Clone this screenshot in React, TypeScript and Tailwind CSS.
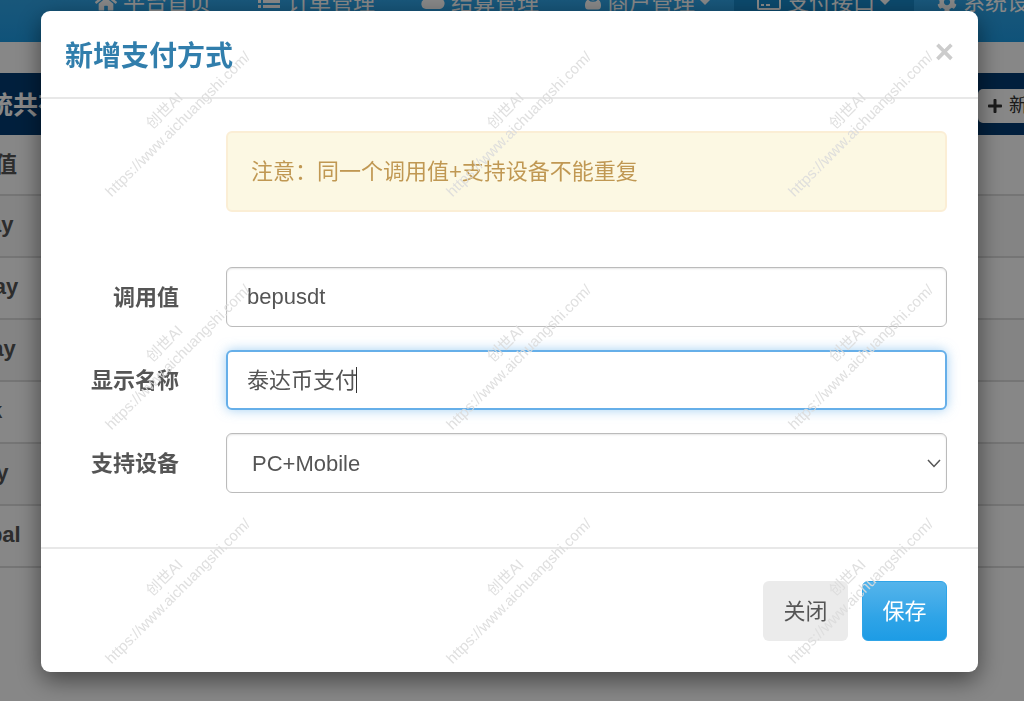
import { useState } from 'react'
import { FaCog, FaHome, FaPlus } from 'react-icons/fa'

const FONT = "font-['Liberation_Sans','Noto_Sans_CJK_SC',sans-serif]"

function ListIcon() {
  return (
    <svg width="24" height="22" viewBox="0 0 24 22" fill="currentColor" aria-hidden="true">
      <path d="M1 4h3v3H1zM6 4h17v3H6zM1 9h3v3H1zM6 9h17v3H6zM1 14h3v3H1zM6 14h17v3H6z" />
    </svg>
  )
}

function CloudIcon() {
  return (
    <svg width="24" height="22" viewBox="0 0 24 22" fill="currentColor" aria-hidden="true">
      <path d="M5 18a5 5 0 0 1-1-9.800A7 7 0 0 1 17 7a5.500 5.500 0 0 1 2 11z" />
    </svg>
  )
}

function UserIcon() {
  return (
    <svg width="16" height="22" viewBox="0 0 16 22" fill="currentColor" aria-hidden="true">
      <circle cx="8" cy="5" r="4.500" />
      <path d="M3 8.500a6.500 6.500 0 0 0 10 0c2 1 3 3 3 6 0 2.500-1 4-3 4H3c-2 0-3-1.500-3-4 0-3 1-5 3-6z" />
    </svg>
  )
}

function CardIcon() {
  return (
    <svg width="24" height="22" viewBox="0 0 24 22" fill="currentColor" aria-hidden="true">
      <path fillRule="evenodd" d="M2 2h20a2 2 0 0 1 2 2v13a2 2 0 0 1-2 2H2a2 2 0 0 1-2-2V4a2 2 0 0 1 2-2zM2 9v8h20V9zM4 13h3v2H4zM9 13h4v2H9z" />
    </svg>
  )
}

function Caret() {
  return (
    <svg className="ml-1" width="12" height="8" viewBox="0 0 12 8" fill="currentColor" aria-hidden="true">
      <path d="M0 1h12L6 7z" />
    </svg>
  )
}

const navItems = [
  { label: '平台首页', icon: <FaHome size={22} />, caret: false, active: false },
  { label: '订单管理', icon: <ListIcon />, caret: false, active: false },
  { label: '结算管理', icon: <CloudIcon />, caret: false, active: false },
  { label: '商户管理', icon: <UserIcon />, caret: true, active: false },
  { label: '支付接口', icon: <CardIcon />, caret: true, active: true },
  { label: '系统设置', icon: <FaCog size={20} />, caret: true, active: false },
]

const payTypes = ['alipay', 'wxpay', 'qqpay', 'bank', 'jdpay', 'paypal']

function Page() {
  return (
    <div className="h-screen overflow-hidden bg-white">
      <nav className="flex h-[42px] items-end bg-linear-to-b from-[#2fa4e7] to-[#1d9ce5] pl-[72px]">
        {navItems.map((item) => (
          <a
            key={item.label}
            href="#"
            className={`flex h-[80px] shrink-0 items-center gap-[6px] px-[23px] text-[22px] whitespace-nowrap text-white ${item.active ? 'bg-[#178acc]' : ''}`}
          >
            {item.icon}
            <span className="flex items-center">
              {item.label}
              {item.caret && <Caret />}
            </span>
          </a>
        ))}
      </nav>

      <main className="mt-[31px] -ml-16">
        <div className="flex h-[62px] items-center justify-between bg-[#033c73] pt-1 pl-[27px]">
          <h3 className="text-[25px] font-bold text-white">系统共有 6 个支付方式</h3>
          <button
            type="button"
            className="-mr-8 flex h-[34px] items-center gap-[6px] rounded-[5px] bg-white px-[9px] text-[19px] text-[#333]"
          >
            <FaPlus size={16} />
            新增
          </button>
        </div>
        <table className="w-full text-left text-[22px] text-[#555]">
          <thead>
            <tr className="h-[60px] border-b-2 border-[#ddd]">
              <th className="pl-[15px] font-bold">调用值</th>
            </tr>
          </thead>
          <tbody>
            {payTypes.map((name) => (
              <tr key={name} className="h-[62px] border-b-2 border-[#ddd] odd:bg-[#f9f9f9]">
                <td className="pb-1 pl-[15px] font-bold">{name}</td>
              </tr>
            ))}
          </tbody>
        </table>
      </main>
    </div>
  )
}

function Watermarks() {
  return (
    <div className="pointer-events-none fixed inset-0 grid grid-cols-3 grid-rows-3 place-items-center" aria-hidden="true">
      {Array.from({ length: 9 }, (_, i) => (
        <div key={i} className="-rotate-45 text-center text-[15px] leading-[19px] whitespace-nowrap text-[#dcdcdc]/90">
          创世AI
          <br />
          https://www.aichuangshi.com/
        </div>
      ))}
    </div>
  )
}

const control = 'block h-[60px] w-full rounded-[6px] bg-white text-[22px] text-[#555] outline-none'
const idle = 'border border-[#bbb] shadow-[inset_0_1px_2px_rgba(0,0,0,0.1)]'
const focused = 'border-2 border-[#66afe9] shadow-[0_0_12px_rgba(102,175,233,0.6)]'

export default function App() {
  const [code, setCode] = useState('bepusdt')
  const [showName, setShowName] = useState('泰达币支付')
  const [device, setDevice] = useState('0')

  return (
    <div className={FONT}>
      <Page />
      <div className="fixed inset-0 bg-black/47" />

      <div className="fixed inset-0 pt-[11px] pr-[46px] pl-[41px]">
        <div
          role="dialog"
          aria-labelledby="modal-title"
          className="rounded-[9px] bg-white shadow-[0_8px_24px_rgba(0,0,0,0.5)]"
        >
          <div className="flex h-[88px] items-start justify-between border-b-2 border-[#e8e8e8] px-6 pt-[25px]">
            <h4 id="modal-title" className="text-[28px] leading-[42px] font-semibold text-[#317eac]">新增支付方式</h4>
            <button type="button" aria-label="关闭窗口" className="text-[33px] leading-[32px] font-bold text-[#ccc]">
              ×
            </button>
          </div>

          <form className="pt-8 pr-[31px] pb-[54px]">
            <div className="mb-[55px] ml-[185px] flex h-[81px] items-center rounded-[6px] border-2 border-[#fbeed5] bg-[#fcf8e3] px-[23px] text-[22px] text-[#c09853]">
              注意：同一个调用值+支持设备不能重复
            </div>
            <div className="grid grid-cols-[138px_1fr] items-center gap-x-[47px] gap-y-[23px]">
              <label htmlFor="code" className="text-right text-[22px] font-bold text-[#555]">调用值</label>
              <input
                id="code"
                value={code}
                onChange={(e) => setCode(e.target.value)}
                className={`${control} ${idle} px-5`}
              />

              <label htmlFor="show-name" className="text-right text-[22px] font-bold text-[#555]">显示名称</label>
              <div className="relative">
                <input
                  id="show-name"
                  value={showName}
                  onChange={(e) => setShowName(e.target.value)}
                  className={`${control} ${focused} px-[19px] pb-1`}
                />
                <span className="absolute top-[17px] left-[130px] h-[26px] w-px bg-[#333]" />
              </div>

              <label htmlFor="device" className="text-right text-[22px] font-bold text-[#555]">支持设备</label>
              <div className="relative">
                <select
                  id="device"
                  value={device}
                  onChange={(e) => setDevice(e.target.value)}
                  className={`${control} ${idle} appearance-none px-[25px]`}
                >
                  <option value="0">PC+Mobile</option>
                  <option value="1">PC</option>
                  <option value="2">Mobile</option>
                </select>
                <svg
                  className="pointer-events-none absolute top-[26px] right-[6px]"
                  width="14"
                  height="9"
                  viewBox="0 0 14 9"
                  fill="none"
                  stroke="#555"
                  strokeWidth="1.500"
                  aria-hidden="true"
                >
                  <path d="M1 1l6 6.500L13 1" />
                </svg>
              </div>
            </div>
          </form>

          <div className="flex justify-end gap-[14px] border-t-2 border-[#e8e8e8] pt-8 pr-[31px] pb-[31px]">
            <button type="button" className="h-[60px] w-[85px] rounded-[6px] bg-[#ebebeb] text-[22px] text-[#555]">
              关闭
            </button>
            <button
              type="button"
              className="h-[60px] w-[85px] rounded-[6px] border border-[#2fa4e7] bg-linear-to-b from-[#54b4eb] via-[#2fa4e7] via-60% to-[#1d9ce5] text-[22px] text-white"
            >
              保存
            </button>
          </div>
        </div>
      </div>

      <Watermarks />
    </div>
  )
}
